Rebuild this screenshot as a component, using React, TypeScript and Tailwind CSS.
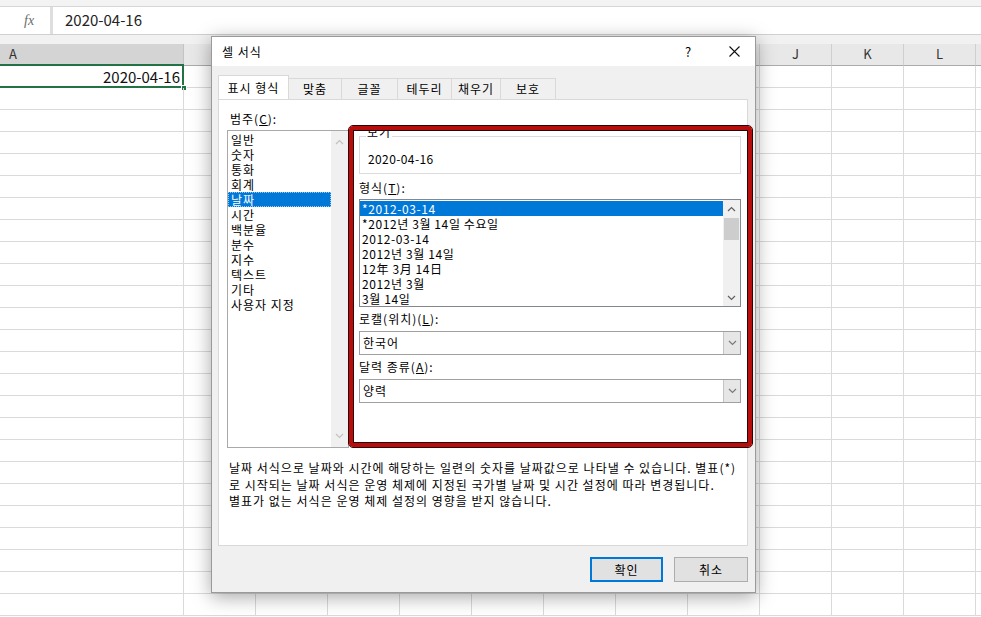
import React from 'react'

const COLS = ['B', 'C', 'D', 'E', 'F', 'G', 'H', 'I', 'J', 'K', 'L', 'M']
// labels under the dialog are hidden anyway
const SHOWN = ['J', 'K', 'L']
const ROWS = Array.from({ length: 25 }, (_, i) => i)

const categories = ['일반', '숫자', '통화', '회계', '날짜', '시간', '백분율', '분수', '지수', '텍스트', '기타', '사용자 지정']
const formats = ['*2012-03-14', '*2012년 3월 14일 수요일', '2012-03-14', '2012년 3월 14일', '12年 3月 14日', '2012년 3월', '3월 14일']
const tabs = [
  { label: '표시 형식', w: 'w-[71px]' },
  { label: '맞춤', w: 'w-[53px]' },
  { label: '글꼴', w: 'w-[56px]' },
  { label: '테두리', w: 'w-[54px]' },
  { label: '채우기', w: 'w-[49px]' },
  { label: '보호', w: 'w-[55px]' },
]

function Chevron({ up, color = '#606060' }: { up?: boolean; color?: string }) {
  return (
    <svg width="9" height="6" viewBox="0 0 9 6" fill="none">
      <path d={up ? 'M1 5L4.5 1.5L8 5' : 'M1 1L4.5 4.5L8 1'} stroke={color} strokeWidth="1.2" />
    </svg>
  )
}

function Dropdown({ value }: { value: string }) {
  return (
    <div className="flex h-[24px] border border-[#a0a0a0] bg-white">
      <div className="flex-1 pl-[3px] leading-[22px] tracking-[1px]">{value}</div>
      <div className="flex w-[17px] items-center justify-center border-l border-[#c4c4c4] bg-[#e6e6e6]">
        <Chevron color="#7a7a7a" />
      </div>
    </div>
  )
}

function Sheet() {
  return (
    <div className="flex flex-col font-['Noto_Sans_CJK_KR',sans-serif]">
      <div className="h-[7px] bg-[#f3f3f3] border-b border-[#d6d6d6]" />
      <div className="flex h-[27px] bg-white">
        <div className="flex w-[50px] shrink-0 items-center pl-[24px]">
          <span className="font-['Liberation_Serif',serif] text-[14px] italic text-[#6b6b6b]">fx</span>
        </div>
        <div className="w-[3px] shrink-0 bg-[#dedede]" />
        <div className="flex flex-1 items-center pl-[12px] text-[15px] text-[#222]">2020-04-16</div>
      </div>
      <div className="h-[10px] border-t border-[#d0d0d0] bg-[#f1f1f1]" />
      <div className="flex h-[22px] text-[13px] text-[#333]">
        <div className="w-[184px] shrink-0 border-r border-b-2 border-r-[#c4c4c4] border-b-[#217346] bg-[#d4d4d4] pl-[9px] leading-[20px]">A</div>
        {COLS.map(c => (
          <div key={c} className="w-[72px] shrink-0 border-r border-b border-r-[#cfcfcf] border-b-[#ababab] bg-[#e8e8e8] text-center leading-[20px]">
            {SHOWN.includes(c) ? c : ''}
          </div>
        ))}
      </div>
      {ROWS.map(r => (
        <div key={r} className="flex h-[22px]">
          <div className="relative w-[184px] shrink-0 border-r border-b border-[#dadada] pr-[3px] text-right text-[15px] leading-[21px] text-[#111]">
            {r === 0 && (
              <>
                2020-04-16
                <div className="absolute left-[-2px] top-[-2px] h-[24px] w-[186px] border-2 border-[#217346]" />
                <div className="absolute right-[-4px] bottom-[-4px] h-[6px] w-[6px] border border-white bg-[#217346]" />
              </>
            )}
          </div>
          {COLS.map(c => (
            <div key={c} className="w-[72px] shrink-0 border-r border-b border-[#dadada]" />
          ))}
        </div>
      ))}
    </div>
  )
}

function FormatDialog() {
  return (
    <div className="absolute left-[211px] top-[36px] flex h-[557px] w-[545px] flex-col border border-[#9a9a9a] bg-[#f0f0f0] text-[12px] text-black shadow-[0_4px_18px_rgba(0,0,0,0.35)] font-['Noto_Sans_CJK_KR',sans-serif]">
      {/* title bar */}
      <div className="flex h-[29px] items-center bg-white pl-[10px]">
        <span className="flex-1 tracking-[1px]">셀 서식</span>
        <span className="w-[20px] text-center text-[13px]">?</span>
        <div className="ml-[30px] mr-[15px] flex w-[12px] items-center justify-center">
          <svg width="11" height="11" viewBox="0 0 11 11"><path d="M0.5 0.5L10.5 10.5M10.5 0.5L0.5 10.5" stroke="#111" strokeWidth="1.1" /></svg>
        </div>
      </div>

      <div className="relative flex flex-1 flex-col px-[6px] pt-[10px]">
        {/* tabs */}
        <div className="flex h-[23px] items-end tracking-[1px]">
          {tabs.map((t, i) => (
            <div
              key={t.label}
              className={
                i === 0
                  ? `${t.w} relative z-10 h-[24px] border border-b-0 border-[#d9d9d9] bg-white pt-[3px] text-center`
                  : `${t.w} h-[21px] border border-l-0 border-b-0 border-[#d9d9d9] bg-[#f0f0f0] pt-[1px] text-center`
              }
            >
              {t.label}
            </div>
          ))}
        </div>

        {/* panel */}
        <div className="mr-[1px] flex h-[447px] flex-col border border-[#d9d9d9] bg-white">
          <div className="flex h-[348px]">
            <div className="flex w-[130px] flex-col pl-[8px] tracking-[1px]">
              <div className="mt-[11px] h-[16px] pl-[3px] leading-[16px]">범주(<u>C</u>):</div>
              <div className="mt-[3px] flex h-[319px] border border-[#a9a9a9] bg-white">
                <div className="flex flex-1 flex-col pt-[1px]">
                  {categories.map(c => (
                    <div
                      key={c}
                      className={
                        c === '날짜'
                          ? 'h-[15px] border border-dotted border-[#99c9ef] bg-[#0078d7] pl-[2px] leading-[13px] text-white'
                          : 'h-[15px] pl-[3px] leading-[15px]'
                      }
                    >
                      {c}
                    </div>
                  ))}
                </div>
                <div className="flex w-[17px] flex-col items-center justify-between bg-[#f0f0f0] py-[8px]">
                  <Chevron up color="#c2c2c2" />
                  <Chevron color="#c2c2c2" />
                </div>
              </div>
            </div>

            <div className="ml-[10px] flex w-[382px] flex-col">
              <div className="relative mt-[36px] h-[38px] border border-[#dcdcdc] pl-[8px] pt-[14px] leading-[16px] tracking-[0.4px]">
                <span className="absolute left-[6px] top-[-13px] bg-white px-[1px] tracking-[1px]">보기</span>
                2020-04-16
              </div>
              <div className="mt-[6px] h-[16px] leading-[16px] tracking-[1px]">형식(<u>T</u>):</div>
              <div className="mt-[3px] flex h-[108px] border border-[#828790] bg-white">
                <div className="flex flex-1 flex-col pt-[1px] tracking-[0.6px]">
                  {formats.map((f, i) => (
                    <div key={f} className={i === 0 ? 'h-[15px] bg-[#0078d7] pl-[2px] leading-[15px] text-white' : 'h-[15px] pl-[2px] leading-[15px]'}>
                      {f}
                    </div>
                  ))}
                </div>
                <div className="flex w-[17px] flex-col items-center bg-[#f0f0f0]">
                  <div className="flex h-[17px] items-center justify-center"><Chevron up /></div>
                  <div className="mt-[1px] h-[22px] w-[15px] bg-[#cdcdcd]" />
                  <div className="flex-1" />
                  <div className="flex h-[17px] items-center justify-center"><Chevron /></div>
                </div>
              </div>
              <div className="mt-[4px] h-[16px] leading-[16px] tracking-[1px]">로캘(위치)(<u>L</u>):</div>
              <div className="mt-[4px]"><Dropdown value="한국어" /></div>
              <div className="mt-[4px] h-[16px] leading-[16px] tracking-[1px]">달력 종류(<u>A</u>):</div>
              <div className="mt-[4px]"><Dropdown value="양력" /></div>
            </div>
          </div>

          <div className="mt-[12px] pl-[10px] leading-[16.5px] tracking-[1px]">
            날짜 서식으로 날짜와 시간에 해당하는 일련의 숫자를 날짜값으로 나타낼 수 있습니다. 별표(*)
            <br />
            로 시작되는 날짜 서식은 운영 체제에 지정된 국가별 날짜 및 시간 설정에 따라 변경됩니다.
            <br />
            별표가 없는 서식은 운영 체제 설정의 영향을 받지 않습니다.
          </div>
        </div>

        {/* buttons */}
        <div className="mt-[11px] flex justify-end gap-[11px] pr-[1px] tracking-[1px]">
          <div className="flex h-[25px] w-[73px] items-center justify-center border-2 border-[#0078d7] bg-[#e1e1e1]">확인</div>
          <div className="flex h-[25px] w-[74px] items-center justify-center border border-[#adadad] bg-[#e1e1e1]">취소</div>
        </div>

        {/* red highlight annotation */}
        <div className="pointer-events-none absolute left-[136px] top-[59px] h-[323px] w-[405px] rounded-[5px] border border-[#2a0505]">
          <div className="h-full w-full rounded-[4px] border-4 border-[#b80d0d] shadow-[inset_0_0_0_1px_#2a0505]" />
        </div>
      </div>
    </div>
  )
}

export default function App() {
  return (
    <div className="relative h-[617px] w-[981px] overflow-hidden bg-white">
      <Sheet />
      <FormatDialog />
    </div>
  )
}
